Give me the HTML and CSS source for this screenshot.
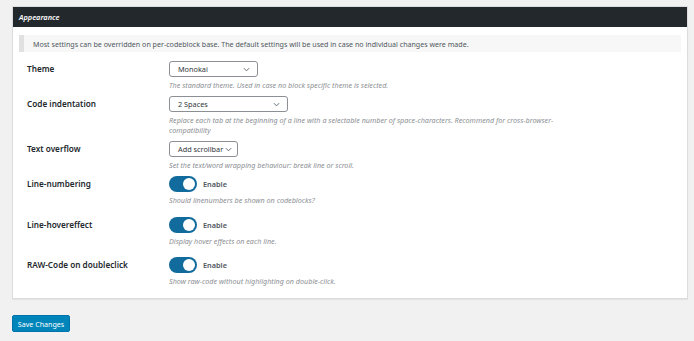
FILE: index.html
```html
<!DOCTYPE html>
<html lang="en">
<head>
<meta charset="utf-8">
<title>Appearance</title>
<link rel="stylesheet" href="styles.css">
</head>
<body>
<div class="page">
  <section class="panel">
    <header class="panel-head"><h2 class="panel-title">Appearance</h2></header>
    <div class="notice">Most settings can be overridden on per-codeblock base. The default settings will be used in case no individual changes were made.</div>
    <div class="rows">
      <div class="row row-first">
        <div class="label">Theme</div>
        <div class="field">
          <div class="select select-theme"><span>Monokai</span><svg class="chev" viewBox="0 0 8 5" width="7" height="5"><path d="M1 1l3 3 3-3" fill="none" stroke="#50575e" stroke-width="1"/></svg></div>
          <p class="desc">The standard theme. Used in case no block specific theme is selected.</p>
        </div>
      </div>
      <div class="row">
        <div class="label">Code indentation</div>
        <div class="field">
          <div class="select select-indent"><span>2 Spaces</span><svg class="chev" viewBox="0 0 8 5" width="7" height="5"><path d="M1 1l3 3 3-3" fill="none" stroke="#50575e" stroke-width="1"/></svg></div>
          <p class="desc">Replace each tab at the beginning of a line with a selectable number of space-characters. Recommend for cross-browser-compatibility</p>
        </div>
      </div>
      <div class="row">
        <div class="label">Text overflow</div>
        <div class="field">
          <div class="select select-overflow"><span>Add scrollbar</span><svg class="chev" viewBox="0 0 8 5" width="7" height="5"><path d="M1 1l3 3 3-3" fill="none" stroke="#50575e" stroke-width="1"/></svg></div>
          <p class="desc">Set the text/word wrapping behaviour: break line or scroll.</p>
        </div>
      </div>
      <div class="row row-toggle row-toggle-first">
        <div class="label">Line-numbering</div>
        <div class="field">
          <div class="toggle-line"><span class="toggle"><span class="knob"></span></span><span class="toggle-text">Enable</span></div>
          <p class="desc">Should linenumbers be shown on codeblocks?</p>
        </div>
      </div>
      <div class="row row-toggle">
        <div class="label">Line-hovereffect</div>
        <div class="field">
          <div class="toggle-line"><span class="toggle"><span class="knob"></span></span><span class="toggle-text">Enable</span></div>
          <p class="desc">Display hover effects on each line.</p>
        </div>
      </div>
      <div class="row row-toggle row-toggle-last">
        <div class="label">RAW-Code on doubleclick</div>
        <div class="field">
          <div class="toggle-line"><span class="toggle"><span class="knob"></span></span><span class="toggle-text">Enable</span></div>
          <p class="desc">Show raw-code without highlighting on double-click.</p>
        </div>
      </div>
    </div>
  </section>
  <div class="actions"><button class="btn-primary" type="button">Save Changes</button></div>
</div>
</body>
</html>
```
FILE: styles.css
```css
* { box-sizing: border-box; }
html, body { margin: 0; padding: 0; }
body {
  background: #f1f1f1;
  font-family: "Noto Sans", "Open Sans", "DejaVu Sans", sans-serif;
  font-size: 7.1px;
  color: #444;
}
.page { padding: 6px 6px 0 12px; }
.panel {
  background: #fff;
  border: 1px solid #dcdcde;
  box-shadow: 0 1px 1px rgba(0,0,0,0.05);
  padding-bottom: 12px;
}
.panel-head {
  background: #23282d;
  height: 20px;
  display: flex;
  align-items: center;
  padding-left: 6px;
}
.panel-title {
  margin: 0;
  color: #fff;
  font-size: 7.4px;
  font-style: italic;
  font-weight: 600;
}
.notice {
  margin: 8px 6px 0 6px;
  height: 17px;
  background: #f7f7f7;
  border-left: 5px solid #e1e1e1;
  padding-left: 9px;
  display: flex;
  align-items: center;
  color: #50575e;
}
.rows { padding-left: 14px; }
.row { display: grid; grid-template-columns: 142px 1fr; margin-top: 6px; }
.row-first { margin-top: 9px; }
.row-toggle { margin-top: 12px; }
.row-toggle-first { margin-top: 6px; }
.row-toggle-last { margin-top: 11px; }
.label {
  font-weight: 600;
  font-size: 8.2px;
  color: #23282d;
  line-height: 16px;
}
.field { min-width: 0; }
.select {
  height: 16px;
  border: 1px solid #8c8f94;
  border-radius: 3px;
  display: flex;
  align-items: center;
  justify-content: space-between;
  padding: 0 7px 0 8px;
  color: #32373c;
  background: #fff;
  font-size: 7.3px;
}
.select-theme { width: 89px; }
.select-indent { width: 119px; }
.select-overflow { width: 69px; padding-right: 5px; }
.chev { display: block; }
.desc {
  margin: 3px 0 0 0;
  font-style: italic;
  font-size: 7.2px;
  color: #8c8f94;
  line-height: 10px;
  max-width: 400px;
}
.toggle-line { display: flex; align-items: center; height: 16px; }
.toggle {
  width: 28px;
  height: 16px;
  border-radius: 8px;
  background: #116c9d;
  display: flex;
  align-items: center;
  justify-content: flex-end;
  padding-right: 2px;
}
.knob {
  width: 12px;
  height: 12px;
  border-radius: 50%;
  background: #fff;
}
.toggle-text { margin-left: 6px; color: #50575e; font-weight: 600; font-size: 7.3px; }
.actions { padding-top: 16px; }
.btn-primary {
  font-family: inherit;
  font-size: 7.1px;
  color: #fff;
  background: #0085ba;
  border: 1px solid #0073aa;
  border-radius: 2px;
  width: 58px;
  height: 17px;
  padding: 0;
  cursor: pointer;
}
```
